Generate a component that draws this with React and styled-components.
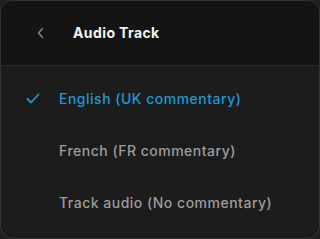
import { createGlobalStyle, styled } from "styled-components";

const GlobalStyle = createGlobalStyle`
  html, body {
    margin: 0;
    padding: 0;
    background: #20201d;
  }
  * {
    box-sizing: border-box;
  }
`;

const tracks = [
  { id: "en", label: "English (UK commentary)", active: true },
  { id: "fr", label: "French (FR commentary)", active: false },
  { id: "none", label: "Track audio (No commentary)", active: false },
];

const App = () => {
  return (
    <>
      <GlobalStyle />
      <StPanel>
        <StHeader>
          <StBackBtn aria-label="Back">
            <svg width="10" height="12" viewBox="0 0 10 12" fill="none">
              <path
                d="M6.5 1.5L2.5 6L6.5 10.5"
                stroke="#8a8a8a"
                strokeWidth="1.4"
                strokeLinecap="round"
                strokeLinejoin="round"
              />
            </svg>
          </StBackBtn>
          <StTitle>Audio Track</StTitle>
        </StHeader>
        <StList>
          {tracks.map((track) => (
            <StItem key={track.id} $active={track.active}>
              <StCheck>
                {track.active && (
                  <svg width="14" height="11" viewBox="0 0 14 11" fill="none">
                    <path
                      d="M1.5 6L5 9.5L12.5 1.5"
                      stroke="#1b9ad8"
                      strokeWidth="1.8"
                      strokeLinecap="round"
                      strokeLinejoin="round"
                    />
                  </svg>
                )}
              </StCheck>
              {track.label}
            </StItem>
          ))}
        </StList>
      </StPanel>
    </>
  );
};

const StPanel = styled.div`
  display: flex;
  flex-direction: column;
  width: 320px;
  height: 239px;
  overflow: hidden;

  background-color: #1c1c1c;
  border: 1px solid #343434;
  border-radius: 13px;

  font-family: Inter, "Liberation Sans", sans-serif;
`;

const StHeader = styled.div`
  display: flex;
  align-items: center;
  height: 65px;
  padding-left: 30px;

  background-color: #141414;
  border-bottom: 1px solid #2c2c2c;
`;

const StBackBtn = styled.button`
  display: flex;
  align-items: center;
  justify-content: center;
  width: 20px;
  height: 20px;
  padding: 0;

  background: none;
  border: none;
`;

const StTitle = styled.h2`
  margin: -1px 0 0 22px;

  color: #f2f2f2;
  font-size: 14px;
  font-weight: 700;
  letter-spacing: 0.4px;
`;

const StList = styled.ul`
  display: flex;
  flex-direction: column;
  margin: 0;
  padding: 6px 0 0;

  list-style: none;
`;

const StItem = styled.li`
  display: flex;
  align-items: center;
  height: 52px;
  padding-left: 25px;

  color: ${(props) => (props.$active ? "#1b9ad8" : "#9c9c9c")};
  font-size: 14px;
  font-weight: 500;
  letter-spacing: 0.5px;
`;

const StCheck = styled.span`
  display: flex;
  align-items: center;
  width: 33px;
  height: 14px;
`;

export default App;
